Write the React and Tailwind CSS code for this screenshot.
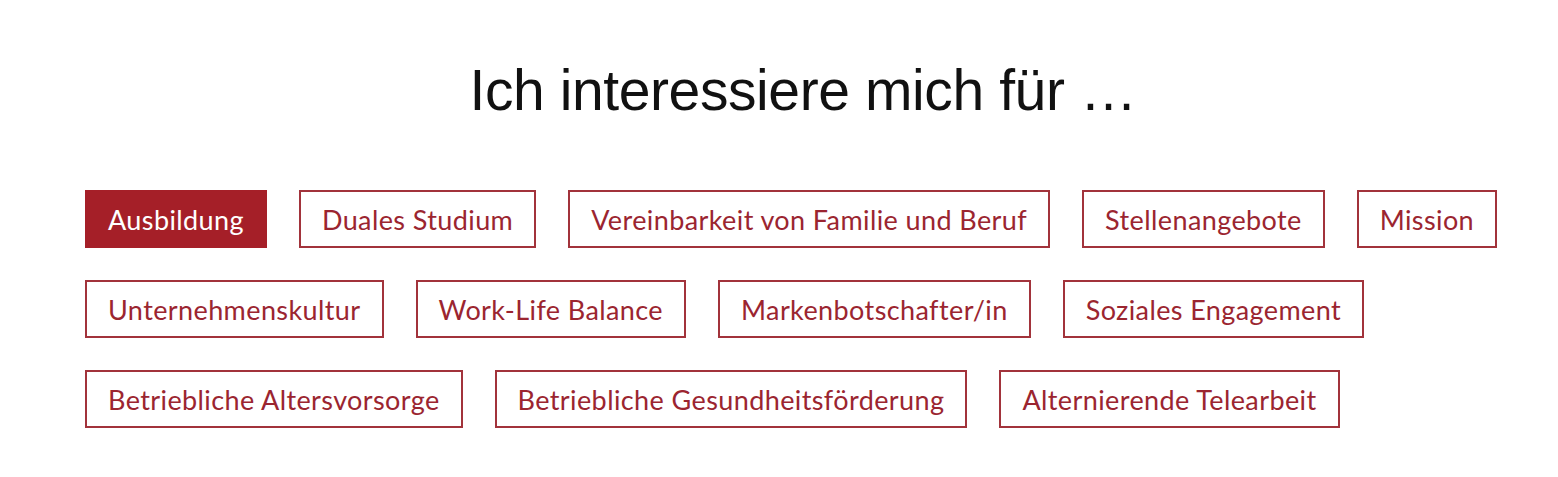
const items = [
  ["Ausbildung", true],
  ["Duales Studium"],
  ["Vereinbarkeit von Familie und Beruf"],
  ["Stellenangebote"],
  ["Mission"],
  ["Unternehmenskultur"],
  ["Work-Life Balance"],
  ["Markenbotschafter/in"],
  ["Soziales Engagement"],
  ["Betriebliche Altersvorsorge"],
  ["Betriebliche Gesundheitsförderung"],
  ["Alternierende Telearbeit"],
];

export default function App() {
  return (
    <div className="w-[1558px] h-[477px] bg-white overflow-hidden">
      <div className="flex justify-center pl-[48px] pt-[56px]">
        <h1
          className="text-[57px] leading-[68px] text-[#111] font-normal tracking-[-0.4px]"
          style={{ fontFamily: '"Liberation Sans", Arial, sans-serif' }}
        >
          Ich interessiere mich für …
        </h1>
      </div>
      <div
        className="mt-[66px] ml-[85px] w-[1430px] flex flex-wrap gap-x-[32px] gap-y-[32px]"
        style={{ fontFamily: 'Lato, "Open Sans", sans-serif' }}
      >
        {items.map(([label, active]) => (
          <div
            key={label}
            className={
              "h-[58px] px-[21px] flex items-center border-2 text-[27px] tracking-[0.4px] leading-none " +
              (active
                ? "bg-[#a51f28] border-[#a51f28] text-white"
                : "bg-white border-[#a2333b] text-[#9b2530]")
            }
          >
            {label}
          </div>
        ))}
      </div>
    </div>
  );
}
